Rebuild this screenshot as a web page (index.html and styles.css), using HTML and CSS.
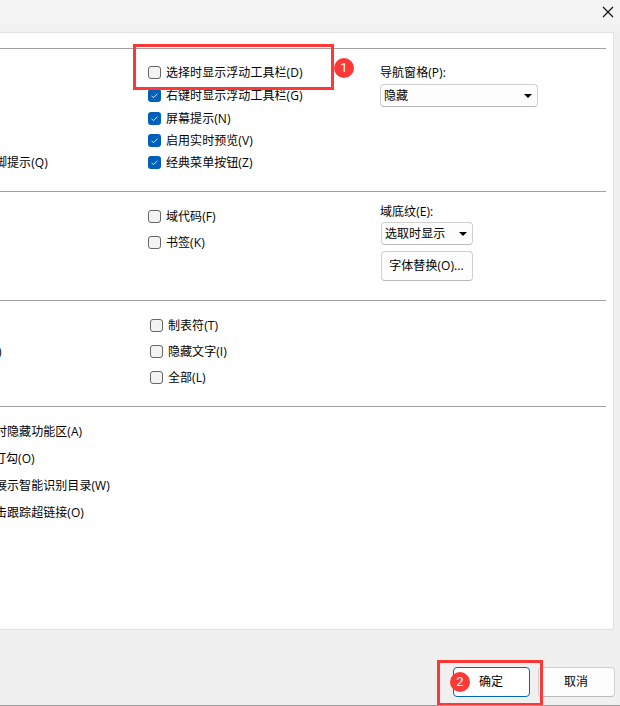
FILE: index.html
```html
<!DOCTYPE html>
<html lang="zh-CN">
<head>
<meta charset="utf-8">
<title>选项</title>
<link rel="stylesheet" href="styles.css">
</head>
<body>
<div class="dialog">
  <header class="titlebar">
    <svg class="close" viewBox="0 0 12 12"><path d="M1 1l10 10M11 1L1 11"/></svg>
  </header>
  <main class="panel">
    <section class="section show">
      <div class="left"><span class="text">脚提示(Q)</span></div>
      <div class="checks">
        <label class="check roomy"><i class="box"></i>选择时显示浮动工具栏(D)</label>
        <label class="check roomy"><i class="box on"><svg viewBox="0 0 13 13"><path d="M3.5 6.7l2 2 4-4"/></svg></i>右键时显示浮动工具栏(G)</label>
        <label class="check"><i class="box on"><svg viewBox="0 0 13 13"><path d="M3.5 6.7l2 2 4-4"/></svg></i>屏幕提示(N)</label>
        <label class="check"><i class="box on"><svg viewBox="0 0 13 13"><path d="M3.5 6.7l2 2 4-4"/></svg></i>启用实时预览(V)</label>
        <label class="check"><i class="box on"><svg viewBox="0 0 13 13"><path d="M3.5 6.7l2 2 4-4"/></svg></i>经典菜单按钮(Z)</label>
      </div>
      <div class="side">
        <span class="text">导航窗格(P):</span>
        <div class="select wide">隐藏<svg class="arrow" viewBox="0 0 8 4"><path d="M0 0h8L4 4z"/></svg></div>
      </div>
    </section>
    <section class="section fields">
      <div class="left"></div>
      <div class="checks">
        <label class="check"><i class="box"></i>域代码(F)</label>
        <label class="check"><i class="box"></i>书签(K)</label>
      </div>
      <div class="side">
        <span class="text">域底纹(E):</span>
        <div class="select narrow">选取时显示<svg class="arrow" viewBox="0 0 8 4"><path d="M0 0h8L4 4z"/></svg></div>
        <button class="button replace">字体替换(O)...</button>
      </div>
    </section>
    <section class="section marks">
      <div class="left"><span class="text">)</span></div>
      <div class="checks">
        <label class="check"><i class="box"></i>制表符(T)</label>
        <label class="check"><i class="box"></i>隐藏文字(I)</label>
        <label class="check"><i class="box"></i>全部(L)</label>
      </div>
    </section>
    <section class="section features">
      <span class="text">时隐藏功能区(A)</span>
      <span class="text">打勾(O)</span>
      <span class="text">展示智能识别目录(W)</span>
      <span class="text">击跟踪超链接(O)</span>
    </section>
  </main>
  <footer class="footer">
    <button class="button primary">确定</button>
    <button class="button">取消</button>
  </footer>
  <div class="frame frame-one"></div>
  <div class="badge badge-one">1</div>
  <div class="frame frame-two"></div>
  <div class="badge badge-two">2</div>
</div>
</body>
</html>
```

FILE: styles.css
```css
* { box-sizing: border-box; }

body {
  margin: 0;
  font: 12px/13px "Open Sans", "Noto Sans CJK SC", sans-serif;
  letter-spacing: 0.06px;
  color: #000;
}

.dialog {
  position: relative;
  display: flex;
  flex-direction: column;
  width: 620px;
  height: 706px;
  overflow: hidden;
  background: #f0f0f0;
  border-bottom: 1px solid #999;
}

.titlebar {
  display: flex;
  justify-content: flex-end;
  height: 25px;
  padding: 6px 6px 0 0;
  margin-bottom: 7px;
  background: #f3f3f3;
}

.close {
  width: 12px;
  height: 12px;
  fill: none;
  stroke: #111;
  stroke-width: 1.2;
}

.panel {
  width: 614px;
  height: 598px;
  padding: 15px 7px 0 0;
  background: #fff;
  border: 1px solid #e3e3e3;
  border-left: 0;
  box-shadow: inset 0 -2px #fafafa;
}

.section {
  display: grid;
  grid-template-columns: 148px 232px 1fr;
  border-top: 1px solid #a0a0a0;
}

.show { height: 143px; padding-top: 17px; }
.fields { height: 109px; padding-top: 18px; }
.marks { height: 106px; padding-top: 18px; grid-template-columns: 150px 230px 1fr; }

.text {
  display: block;
  height: 13px;
  white-space: nowrap;
}

.show .left .text { margin: 90px 0 0 -5px; }
.marks .left .text { margin: 26px 0 0 -2px; }

.checks {
  display: flex;
  flex-direction: column;
  gap: 13px;
}

.show .checks { gap: 9px; }
.roomy { margin-bottom: 1px; }

.check {
  display: flex;
  gap: 5px;
  height: 13px;
  white-space: nowrap;
}

.box {
  width: 13px;
  height: 13px;
  background: #f3f3f3;
  border: 1px solid #666;
  border-radius: 3px;
}

.box.on {
  background: #005fb8;
  border: 0;
}

.box svg {
  display: block;
  width: 13px;
  height: 13px;
  fill: none;
  stroke: #d8e8f5;
}

.fields .side { margin-top: -5px; }

.select {
  display: flex;
  align-items: center;
  justify-content: space-between;
  height: 23px;
  padding: 0 5px 0 3px;
  background: #fdfdfd;
  border: 1px solid #d0d0d0;
  border-bottom-color: #b8b8b8;
  border-radius: 4px;
}

.wide { width: 158px; margin-top: 5px; }
.narrow { width: 92px; margin: 4px 0 6px 1px; }

.arrow {
  width: 8px;
  height: 4px;
}

.button {
  width: 77px;
  height: 30px;
  padding: 0 1px 1px 0;
  font: inherit;
  letter-spacing: inherit;
  color: #000;
  background: #fdfdfd;
  border: 1px solid #d0d0d0;
  border-bottom-color: #bbb;
  border-radius: 4px;
}

.replace { width: 92px; margin-left: 1px; }

.features {
  grid-template-columns: 1fr;
  justify-content: start;
  align-content: start;
  row-gap: 14px;
  padding-top: 18px;
}

.features .text { margin-left: -5px; }
.features .text:nth-child(2) { margin-left: -6px; }

.footer {
  display: flex;
  justify-content: flex-end;
  gap: 8px;
  padding: 37px 5px 0 0;
}

.primary {
  background: #fff;
  border-color: #0067c0;
}

.frame {
  position: absolute;
  border: 3px solid #fd3938;
}

.frame-one { left: 133px; top: 44px; width: 201px; height: 46px; }
.frame-two { left: 437px; top: 660px; width: 106px; height: 46px; }

.badge {
  position: absolute;
  width: 20px;
  height: 20px;
  border-radius: 50%;
  background: #fd3938;
  color: #fff;
  font: 13px/20px Roboto, sans-serif;
  text-align: center;
}

.badge-one { left: 334px; top: 58px; }
.badge-two { left: 450px; top: 672px; }
```
